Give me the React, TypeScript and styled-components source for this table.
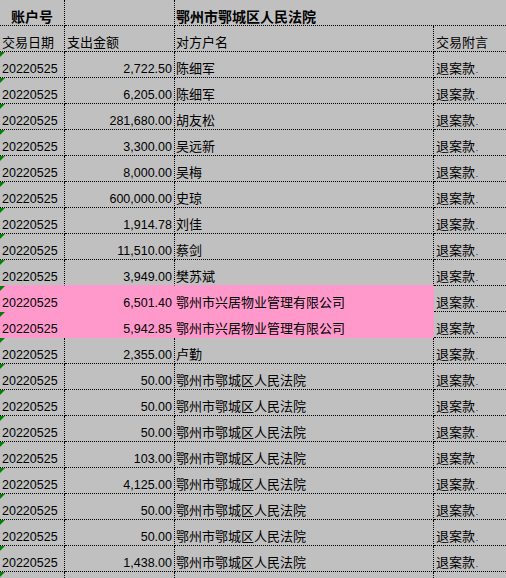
import React from 'react';
import styled, { createGlobalStyle, css } from 'styled-components';

const GlobalStyle = createGlobalStyle`
  html, body {
    margin: 0;
    padding: 0;
    background: #c0c0c0;
    overflow: hidden;
  }
`;

const PINK = '#ff99cc';
const GRID = '#000';

interface Row {
  date: string;
  amount: string;
  name: string;
  memo: string;
  pink?: boolean;
}

const rows: Row[] = [
  { date: '20220525', amount: '2,722.50', name: '陈细军', memo: '退案款' },
  { date: '20220525', amount: '6,205.00', name: '陈细军', memo: '退案款' },
  { date: '20220525', amount: '281,680.00', name: '胡友松', memo: '退案款' },
  { date: '20220525', amount: '3,300.00', name: '吴远新', memo: '退案款' },
  { date: '20220525', amount: '8,000.00', name: '吴梅', memo: '退案款' },
  { date: '20220525', amount: '600,000.00', name: '史琼', memo: '退案款' },
  { date: '20220525', amount: '1,914.78', name: '刘佳', memo: '退案款' },
  { date: '20220525', amount: '11,510.00', name: '蔡剑', memo: '退案款' },
  { date: '20220525', amount: '3,949.00', name: '樊苏斌', memo: '退案款' },
  { date: '20220525', amount: '6,501.40', name: '鄂州市兴居物业管理有限公司', memo: '退案款', pink: true },
  { date: '20220525', amount: '5,942.85', name: '鄂州市兴居物业管理有限公司', memo: '退案款', pink: true },
  { date: '20220525', amount: '2,355.00', name: '卢勤', memo: '退案款' },
  { date: '20220525', amount: '50.00', name: '鄂州市鄂城区人民法院', memo: '退案款' },
  { date: '20220525', amount: '50.00', name: '鄂州市鄂城区人民法院', memo: '退案款' },
  { date: '20220525', amount: '50.00', name: '鄂州市鄂城区人民法院', memo: '退案款' },
  { date: '20220525', amount: '103.00', name: '鄂州市鄂城区人民法院', memo: '退案款' },
  { date: '20220525', amount: '4,125.00', name: '鄂州市鄂城区人民法院', memo: '退案款' },
  { date: '20220525', amount: '50.00', name: '鄂州市鄂城区人民法院', memo: '退案款' },
  { date: '20220525', amount: '50.00', name: '鄂州市鄂城区人民法院', memo: '退案款' },
  { date: '20220525', amount: '1,438.00', name: '鄂州市鄂城区人民法院', memo: '退案款' },
];

const Sheet = styled.div`
  display: grid;
  grid-template-columns: 65px 110px 259px 72px;
  grid-auto-rows: 26px;
  width: 506px;
  height: 578px;
  overflow: hidden;
  color: #000;
  font-family: "Liberation Sans", "Noto Sans CJK SC", sans-serif;
`;

const Cell = styled.div<{
  $fill?: string;
  $coverBottom?: boolean;
  $noRight?: boolean;
  $align?: 'left' | 'right' | 'center';
  $span?: number;
  $bold?: boolean;
  $cjk?: boolean;
}>`
  position: relative;
  box-sizing: border-box;
  display: flex;
  align-items: flex-end;
  justify-content: ${({ $align }) =>
    $align === 'right' ? 'flex-end' : $align === 'center' ? 'center' : 'flex-start'};
  padding: 0 2px 1px 2px;
  background: ${({ $fill }) => $fill || 'transparent'};
  border-right: 1px ${({ $fill }) => ($fill ? 'solid' : 'dotted')} ${({ $fill }) => $fill || GRID};
  border-bottom: 1px ${({ $fill, $coverBottom }) => ($fill || $coverBottom ? 'solid' : 'dotted')}
    ${({ $fill, $coverBottom }) => $fill || ($coverBottom ? PINK : GRID)};
  ${({ $noRight }) =>
    $noRight &&
    css`
      border-right: none;
    `}
  ${({ $span }) =>
    $span &&
    css`
      grid-column: span ${$span};
    `}
  font-size: ${({ $cjk, $bold }) => ($bold ? '14px' : $cjk ? '13px' : '12.5px')};
  font-weight: ${({ $bold }) => ($bold ? 700 : 400)};
  line-height: 14px;
  white-space: nowrap;
`;

const DateCell = styled(Cell)`
  &::before {
    content: '';
    position: absolute;
    top: 0;
    left: 0;
    width: 0;
    height: 0;
    border-top: 5px solid #008000;
    border-right: 5px solid transparent;
  }
`;

const NameCell = styled(Cell)`
  padding-left: 1px;
`;

const Tail = styled.span`
  display: inline-block;
  width: 2px;
  height: 1px;
  margin: 0 0 3px 1px;
  background: #5a78b8;
`;

export default function App() {
  return (
    <>
      <GlobalStyle />
      <Sheet>
        <Cell $align="center" $bold>账户号</Cell>
        <Cell />
        <NameCell $bold $span={2} $noRight>鄂州市鄂城区人民法院</NameCell>

        <Cell $cjk>交易日期</Cell>
        <Cell $cjk>支出金额</Cell>
        <NameCell $cjk>对方户名</NameCell>
        <Cell $cjk $noRight>交易附言</Cell>

        {rows.map((r, i) => {
          const fill = r.pink ? PINK : undefined;
          const cover = !r.pink && rows[i + 1]?.pink;
          return (
            <React.Fragment key={i}>
              <DateCell $fill={fill} $coverBottom={cover}>{r.date}</DateCell>
              <Cell $fill={fill} $coverBottom={cover} $align="right">{r.amount}</Cell>
              <NameCell $fill={fill} $coverBottom={cover} $cjk>{r.name}</NameCell>
              <Cell $cjk $noRight>
                {r.memo}
                <Tail />
              </Cell>
            </React.Fragment>
          );
        })}

        {/* next row, only its top edge shows */}
        <DateCell />
        <Cell />
        <NameCell />
        <Cell $noRight />
      </Sheet>
    </>
  );
}
